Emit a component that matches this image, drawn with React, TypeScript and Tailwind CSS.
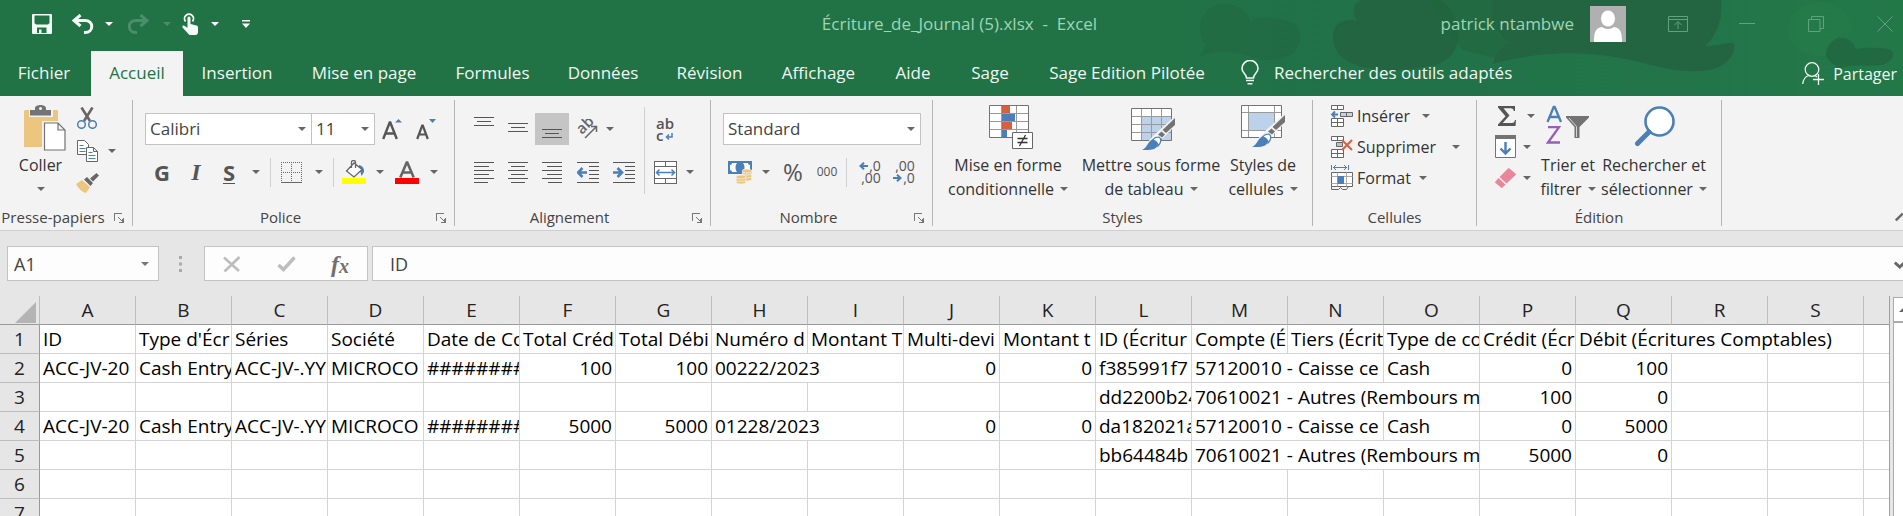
import type { ReactNode } from "react";

const UI = "font-['Open_Sans','Noto_Sans',sans-serif]";
const GRID = "font-['Open_Sans','Noto_Sans',sans-serif]";

/* ---------- small shared pieces ---------- */

function Caret({ className = "fill-[#666]" }: { className?: string }) {
  return (
    <svg width="8" height="4" viewBox="0 0 8 4" className={`shrink-0 ${className}`} aria-hidden="true">
      <path d="M0 0h8L4 4z" />
    </svg>
  );
}

function Btn({ label, className, children }: { label: string; className: string; children: ReactNode }) {
  return (
    <button type="button" aria-label={label} className={`flex shrink-0 items-center justify-center ${className}`}>
      {children}
    </button>
  );
}

function Sep() {
  return <span className="mx-[3px] h-[29px] w-px shrink-0 bg-[#d0d0d0]" />;
}

function Group({
  label,
  className,
  launcher = false,
  children,
}: {
  label: string;
  className: string;
  launcher?: boolean;
  children: ReactNode;
}) {
  return (
    <section aria-label={label} className={`my-1 flex h-[126px] shrink-0 flex-col border-r border-[#b5b5b5] ${className}`}>
      <div className="h-[109px] shrink-0">{children}</div>
      <div className="flex items-center">
        <span className="flex-1 text-center text-[15px] leading-[17px] whitespace-nowrap text-[#444]">{label}</span>
        {launcher && (
          <Btn label={`${label} : options`} className="w-[26px]">
            <svg width="10" height="10" viewBox="0 0 10 10" fill="none" stroke="#777" shapeRendering="crispEdges">
              <path d="M.5 8V.5H8" />
              <path d="M4 4l4 4M9.500 5v4.500H5M8.500 6v3H6" />
            </svg>
          </Btn>
        )}
      </div>
    </section>
  );
}

/* ---------- title bar ---------- */

function HeaderArt() {
  return (
    <svg
      className="absolute top-0 right-0"
      width="723"
      height="96"
      viewBox="0 0 723 96"
      aria-hidden="true"
    >
      <defs>
        <linearGradient id="fade" x1="0" x2="1">
          <stop offset="0" stopColor="#217346" />
          <stop offset=".2" stopColor="#21704a" stopOpacity=".7" />
          <stop offset="1" stopColor="#237848" />
        </linearGradient>
      </defs>
      <rect width="723" height="96" fill="url(#fade)" />
      <g fill="#226540">
        <path opacity=".5" d="M20 30C20 12 32 3 46 4c14 1 22 8 24 18 10-8 28-4 42 0 12 6 8 24 2 30-8 8-26 10-40 6-20-8-40-8-54-1 2-6 4-10 6-12-4-4-6-9-6-15z" />
        <path d="M153 36c0-14 14-18 24-15C170 8 176 0 184 0h76c14 8 20 24 18 40-2 14-12 24-30 26-20 4-40 6-60 2-22-4-35-14-35-32z" />
        <path d="M250 0h90l-18 60-40-10z" opacity=".6" />
        <path d="M313 0h228c2 14-2 34-16 46 14 0 24-4 28-3 4 6-2 18-14 24-18 8-46 4-76-4-44-12-98-14-150 1 2-10 8-16 16-22-14-10-20-26-16-42z" />
        <path opacity=".8" d="M646 54c0-12 8-16 16-16 8 0 12 6 14 11 10-2 32-2 36 2 4 6-4 14-12 14-16 2-30-2-40 4-4-4-14-8-14-15z" />
      </g>
      <g fill="#247a49" opacity=".8">
        <path d="M610 40c-8-20 8-36 26-38 24-4 38 16 36 30-14 2-26 12-26 24-16 2-30-4-36-16z" />
      </g>
    </svg>
  );
}

function TitleBar() {
  return (
    <div className="relative grid h-[51px] grid-cols-[1fr_auto_1fr] items-center pb-[3px] pl-4">
      <div className="flex items-center pl-[7px]">
        <Btn label="Enregistrer" className="w-[38px]">
          <svg width="20" height="20" viewBox="0 0 20 20">
            <path fill="#f4faf6" fillRule="evenodd" d="M1 0h18a1 1 0 0 1 1 1v18a1 1 0 0 1-1 1H1a1 1 0 0 1-1-1V1a1 1 0 0 1 1-1zm1.500 1.500v7.500l1.500 1.500h12l1.500-1.500V1.500zM5 13.500V19h2v-3.500h2.500V19H14.500v-5.500z" />
          </svg>
        </Btn>
        <Btn label="Annuler" className="w-[44px]">
          <svg width="22" height="20" viewBox="0 0 22 20" fill="none" stroke="#f4faf6" strokeWidth="3">
            <path d="M8.500 1L2 6.500 8.500 12M2.500 6.500H13c9 0 9 12 0 12h-1" />
          </svg>
        </Btn>
        <Btn label="Options d'annulation" className="w-2">
          <Caret className="fill-white" />
        </Btn>
        <Btn label="Rétablir" className="w-[50px]">
          <svg width="22" height="20" viewBox="0 0 22 20" fill="none" stroke="#4b8e69" strokeWidth="3">
            <path d="M13.500 1L20 6.500 13.500 12M19.500 6.500H9c-9 0-9 12 0 12h1" />
          </svg>
        </Btn>
        <Btn label="Options de rétablissement" className="w-2">
          <Caret className="fill-[#4b8e69]" />
        </Btn>
        <Btn label="Mode tactile/souris" className="w-[38px]">
          <svg width="16" height="22" viewBox="0 0 16 22">
            <path fill="none" stroke="#f4faf6" strokeWidth="1.800" d="M3.500 8.500A4.500 4.500 0 1 1 10.500 8.500" />
            <path fill="#f4faf6" d="M5.500 5a1.500 1.500 0 0 1 3 0v6l6 1.500c1 .3 1.500 1 1.500 2V19c0 2-1 3-2.500 3H8.500c-1 0-1.500-.4-2-1L.5 14.500c-.8-1 .6-2.500 1.800-1.700l3.200 2z" />
          </svg>
        </Btn>
        <Btn label="Options du mode tactile" className="w-3">
          <Caret className="fill-white" />
        </Btn>
        <Btn label="Personnaliser la barre d'outils" className="w-[50px]">
          <svg width="8" height="8" viewBox="0 0 8 8" fill="#fff">
            <path d="M0 0h8v1.500H0zM0 3.500h8L4 8z" />
          </svg>
        </Btn>
      </div>
      <h1 className="text-[17px] whitespace-pre text-[#9fd5b5]">Écriture_de_Journal (5).xlsx  -  Excel</h1>
      <div className="flex items-center justify-end">
        <span className="text-[17px] whitespace-nowrap text-[#9fd5b5]">patrick ntambwe</span>
        <svg className="mr-[17px] ml-4 shrink-0" width="36" height="36" viewBox="0 0 36 36" role="img" aria-label="Compte">
          <rect width="36" height="36" fill="#b0b0b0" />
          <ellipse cx="18" cy="12.500" rx="7" ry="8" fill="#fff" />
          <path fill="#fff" d="M4 36c0-9 1-14 8-15 3 2.500 9 2.500 12 0 7 1 8 6 8 15z" />
        </svg>
        <Btn label="Options d'affichage du ruban" className="w-[69px]">
          <svg width="20" height="16" viewBox="0 0 20 16" fill="none" stroke="#62a17f">
            <path d="M.5.5h19v15H.5zM.5 3.500h19M10 13V6M6.500 9L10 5.500 13.500 9" />
          </svg>
        </Btn>
        <Btn label="Réduire" className="w-[69px]">
          <svg width="16" height="2" viewBox="0 0 16 2">
            <path fill="#62a17f" d="M0 0h16v1H0z" />
          </svg>
        </Btn>
        <Btn label="Niveau inférieur" className="w-[69px]">
          <svg width="16" height="16" viewBox="0 0 16 16" fill="none" stroke="#62a17f">
            <path d="M.5 3.500h11.500v12H.5zM3.500 3.500v-3h12v12h-3.500" />
          </svg>
        </Btn>
        <Btn label="Fermer" className="w-[53px] pl-4">
          <svg width="16" height="16" viewBox="0 0 16 16" fill="none" stroke="#62a17f">
            <path d="M.5.5l15 15M15.500.5l-15 15" />
          </svg>
        </Btn>
      </div>
    </div>
  );
}

const TABS: [string, string][] = [
  ["Fichier", "w-[91px] pr-[3px]"],
  ["Accueil", "w-[92px]"],
  ["Insertion", "w-[108px]"],
  ["Mise en page", "w-[146px]"],
  ["Formules", "w-[111px]"],
  ["Données", "w-[110px]"],
  ["Révision", "w-[103px]"],
  ["Affichage", "w-[115px]"],
  ["Aide", "w-[74px]"],
  ["Sage", "w-[80px]"],
  ["Sage Edition Pilotée", "w-[194px]"],
];

function Tabs() {
  return (
    <nav className="relative flex h-[45px] text-[17px] whitespace-nowrap text-[#eef7f1]">
      {TABS.map(([name, width]) => (
        <button
          key={name}
          type="button"
          className={`shrink-0 pb-[2px] text-center ${width} ${name === "Accueil" ? "bg-[#f3f3f3] text-[#217346]" : ""}`}
        >
          {name}
        </button>
      ))}
      <button type="button" className="flex shrink-0 items-center gap-[15px] pb-[2px] pl-[17px]">
        <svg width="18" height="25" viewBox="0 0 18 25" fill="none" stroke="#eef7f1" strokeWidth="1.600">
          <path d="M5.500 18c0-4-4.500-5-4.500-9.500a8 8 0 0 1 16 0C17 13 12.500 14 12.500 18zM5 20.500h8M6.500 23.700h5" />
        </svg>
        <span>Rechercher des outils adaptés</span>
      </button>
      <button type="button" className="ml-auto flex shrink-0 items-center gap-[9px] pr-[6px]">
        <svg width="22" height="23" viewBox="0 0 22 23" fill="none" stroke="#eef7f1" strokeWidth="1.300">
          <circle cx="10" cy="7.500" r="6.800" />
          <path d="M.7 22c.5-4.500 3-7.500 6-8.500M11 17.500h11M16.500 12v11M13 13.500l2 1.500" />
        </svg>
        <span className="text-base">Partager</span>
      </button>
    </nav>
  );
}

/* ---------- ribbon ---------- */

function Clipboard() {
  return (
    <Group label="Presse-papiers" launcher className="w-[133px]">
      <div className="flex">
        <button type="button" className="flex w-[73px] flex-col items-center pt-[5px] pl-2 text-base leading-6 text-[#333]">
          <svg width="42" height="46" viewBox="0 0 42 46" className="ml-2">
            <path fill="#ecc67e" d="M1 5h32a1 1 0 0 1 1 1v36H0V6z" />
            <path fill="#f3f3f3" d="M5 5h24v7H5z" />
            <path fill="#737373" d="M6 5h5V3c0-2 3-3 5.500-3s5.500 1 5.500 3v2h5v5.500H6z" />
            <circle cx="16.500" cy="3.500" r="1.500" fill="#f3f3f3" />
            <path fill="#f3f3f3" d="M18 16h18l6 6v24H18z" />
            <path fill="#fff" stroke="#737373" strokeWidth="1.200" d="M20.500 18h13.500l7 7v20H20.500zM34 18v7h7" />
          </svg>
          <span className="pt-[2px]">Coller</span>
          <span className="flex h-6 items-center">
            <Caret />
          </span>
        </button>
        <div className="flex flex-col pt-[5px]">
          <Btn label="Couper" className="h-[26px] w-7">
            <svg width="20" height="22" viewBox="0 0 20 22" fill="none">
              <path stroke="#666" strokeWidth="2.600" d="M4.500 0.500L13 14M15.500 0.500L7 14" />
              <circle cx="4.500" cy="17.500" r="3.800" stroke="#4a7fb8" strokeWidth="1.500" />
              <circle cx="15.500" cy="17.500" r="3.800" stroke="#4a7fb8" strokeWidth="1.500" />
            </svg>
          </Btn>
          <div className="flex">
            <Btn label="Copier" className="h-10 w-7">
              <svg width="21" height="22" viewBox="0 0 21 22" fill="#fff" stroke="#666">
                <path d="M.5.5h7l4 4v10H.5z" />
                <path stroke="#4a7fb8" d="M2.500 5.500h4M2.500 8.500h6M2.500 11.500h6" />
                <path d="M9.500 7.500h7l4 4v10h-11zM16.500 7.500v4h4" />
                <path stroke="#4a7fb8" d="M11.500 12.500h4M11.500 15.500h7M11.500 18.500h7" />
              </svg>
            </Btn>
            <Btn label="Options de copie" className="w-[22px]">
              <Caret />
            </Btn>
          </div>
          <Btn label="Reproduire la mise en forme" className="h-6 w-7">
            <svg width="23" height="20" viewBox="0 0 23 20">
              <path fill="#ecc67e" d="M0 11l6-4 8 7-4 6c-4-1-8-5-10-9z" />
              <path fill="#666" d="M8 6.500l3-2.500 6 6-2.500 3zM14 5.500L20.500 0 23 2.500 17 8.500z" />
            </svg>
          </Btn>
        </div>
      </div>
    </Group>
  );
}

function Combo({ label, value, className }: { label: string; value: string; className: string }) {
  return (
    <div className={`relative h-8 shrink-0 ${className}`}>
      <select
        aria-label={label}
        defaultValue={value}
        className="h-full w-full appearance-none border border-[#c3c3c3] bg-white pl-1 text-[17px] leading-7 text-[#444]"
      >
        <option>{value}</option>
      </select>
      <span className="pointer-events-none absolute inset-y-0 right-[6px] flex items-center">
        <Caret />
      </span>
    </div>
  );
}

function FontGroup() {
  return (
    <Group label="Police" launcher className="w-[322px]">
      <div className="flex flex-col gap-[11px] pt-[13px] pl-3">
        <div className="flex">
          <Combo label="Police" value="Calibri" className="w-[167px]" />
          <Combo label="Taille de police" value="11" className="-ml-px w-[64px]" />
          <Btn label="Augmenter la taille de police" className="w-[34px]">
            <svg width="20" height="22" viewBox="0 0 20 22">
              <path fill="none" stroke="#555" strokeWidth="2.400" d="M1.200 21L7.700 4.500h.6L14.800 21M4 15.500h8" />
              <path fill="#4a7fb8" d="M13 4.500h7L16.500 1z" />
            </svg>
          </Btn>
          <Btn label="Réduire la taille de police" className="w-[34px]">
            <svg width="20" height="22" viewBox="0 0 20 22">
              <path fill="none" stroke="#555" strokeWidth="2.200" d="M1.200 21L6.200 7.500h.6L11.800 21M3.500 16.500h6" />
              <path fill="#4a7fb8" d="M13 1h7l-3.500 4z" />
            </svg>
          </Btn>
        </div>
        <div className="flex h-8 items-center text-[22px] text-[#555]">
          <Btn label="Gras" className="w-[34px] font-bold">
            G
          </Btn>
          <Btn label="Italique" className="w-[34px] font-['Liberation_Serif',serif] text-2xl font-bold italic">
            I
          </Btn>
          <Btn label="Souligné" className="w-8 font-bold">
            <span className="border-b border-[#555] leading-[22px]">S</span>
          </Btn>
          <Btn label="Options de soulignement" className="w-[22px]">
            <Caret />
          </Btn>
          <Sep />
          <Btn label="Bordures" className="w-[34px]">
            <svg width="21" height="21" viewBox="0 0 21 21" fill="none" stroke="#666" shapeRendering="crispEdges">
              <path strokeDasharray="1 1" d="M0 .5h21M.5 0v20M20.500 0v20M10.500 0v20M0 10.500h21" />
              <path d="M0 20.500h21" />
            </svg>
          </Btn>
          <Btn label="Options de bordure" className="w-[22px]">
            <Caret />
          </Btn>
          <Sep />
          <Btn label="Couleur de remplissage" className="w-[34px]">
            <svg width="24" height="24" viewBox="0 0 24 24">
              <path fill="#ff0" d="M0 18h24v6H0z" />
              <path fill="#4a7fb8" d="M17 5c4 1 5.500 4 5 7l-2.500 4c-1-3-1-6-2.500-8z" />
              <path fill="#fff" stroke="#666" strokeWidth="1.300" d="M4.500 11l7.500-8 8 6.500-8 7.500zM9.500 8V2c0-2 4-2 4 0v6" />
            </svg>
          </Btn>
          <Btn label="Options de remplissage" className="w-[18px]">
            <Caret />
          </Btn>
          <Btn label="Couleur de police" className="w-9">
            <svg width="24" height="24" viewBox="0 0 24 24">
              <path fill="none" stroke="#666" strokeWidth="2.600" d="M5.300 17.500L11.700 2.500h.6L18.700 17.500M8 12.500h8" />
              <path fill="#f00" d="M0 18h24v6H0z" />
            </svg>
          </Btn>
          <Btn label="Options de couleur de police" className="w-[18px]">
            <Caret />
          </Btn>
        </div>
      </div>
    </Group>
  );
}

function Lines({ d, h = 21 }: { d: string; h?: number }) {
  return (
    <svg width="20" height={h} viewBox={`0 0 20 ${h}`} stroke="#555" shapeRendering="crispEdges" fill="none">
      <path d={d} />
    </svg>
  );
}

function Indent({ right = false }: { right?: boolean }) {
  return (
    <svg width="22" height="21" viewBox="0 0 22 21" fill="none">
      <path stroke="#555" shapeRendering="crispEdges" d="M0 .5h22M12 4.500h10M12 8.500h10M12 12.500h10M12 16.500h10M0 20.500h22" />
      {right ? (
        <path stroke="#4a7fb8" strokeWidth="2.600" d="M0 10.500h8M4.500 6l4.500 4.500L4.500 15" />
      ) : (
        <path stroke="#4a7fb8" strokeWidth="2.600" d="M2 10.500h8M5.500 6L1 10.500 5.500 15" />
      )}
    </svg>
  );
}

function AlignGroup() {
  return (
    <Group label="Alignement" launcher className="w-[256px]">
      <div className="flex pl-3">
        <div className="flex w-[174px] flex-col gap-[11px] pt-[13px]">
          <div className="flex h-8">
            <Btn label="Aligner en haut" className="w-[34px]">
              <Lines d="M0 .5h20M3 4.500h14M0 8.500h20" h={24} />
            </Btn>
            <Btn label="Aligner au centre" className="w-[34px]">
              <Lines d="M0 6.500h20M3 10.500h14M0 14.500h20" h={24} />
            </Btn>
            <Btn label="Aligner en bas" className="w-[34px] bg-[#c5c5c5]">
              <Lines d="M0 12.500h20M3 16.500h14M0 20.500h20" h={24} />
            </Btn>
            <Btn label="Orientation" className="w-9">
              <svg width="22" height="20" viewBox="0 0 22 20">
                <text x="0" y="0" transform="translate(6 16) rotate(-45)" className="font-['Open_Sans',sans-serif] text-[15px] font-semibold" fill="#666">
                  ab
                </text>
                <path fill="none" stroke="#666" strokeWidth="1.500" d="M9 19L20 8M15 7.500h5.500V13" />
              </svg>
            </Btn>
            <Btn label="Options d'orientation" className="w-[10px]">
              <Caret />
            </Btn>
          </div>
          <div className="flex h-8">
            <Btn label="Aligner à gauche" className="w-[34px]">
              <Lines d="M0 .5h20M0 4.500h15M0 8.500h20M0 12.500h15M0 16.500h20M0 20.500h14" />
            </Btn>
            <Btn label="Centrer" className="w-[34px]">
              <Lines d="M0 .5h20M3 4.500h14M0 8.500h20M3 12.500h14M0 16.500h20M3 20.500h14" />
            </Btn>
            <Btn label="Aligner à droite" className="w-[34px]">
              <Lines d="M0 .5h20M5 4.500h15M0 8.500h20M5 12.500h15M0 16.500h20M6 20.500h14" />
            </Btn>
            <Btn label="Diminuer le retrait" className="w-[38px]">
              <Indent />
            </Btn>
            <Btn label="Augmenter le retrait" className="w-[34px]">
              <Indent right />
            </Btn>
          </div>
        </div>
        <span className="mx-[3px] mt-[7px] h-[87px] w-px bg-[#d0d0d0]" />
        <div className="flex flex-col gap-[11px] pt-[13px]">
          <Btn label="Renvoyer à la ligne automatiquement" className="h-8 w-[34px]">
            <span className="flex flex-col text-[15px] leading-[12px] font-semibold text-[#555]">
              <span>ab</span>
              <span className="flex items-end">
                c
                <svg width="8" height="8" viewBox="0 0 8 8" fill="none" stroke="#4a7fb8" strokeWidth="1.500" className="ml-[2px]">
                  <path d="M7 0v4H1.500M4 1.500L1.500 4 4 6.500" />
                </svg>
              </span>
            </span>
          </Btn>
          <div className="flex h-8">
            <Btn label="Fusionner et centrer" className="w-[34px]">
              <svg width="23" height="23" viewBox="0 0 23 23" fill="none">
                <path fill="#fff" stroke="#666" shapeRendering="crispEdges" d="M.5.5h22v22H.5zM.5 5.500h22M.5 17.500h22M11.500.5v5M11.500 17.500v5" />
                <path stroke="#4a7fb8" strokeWidth="1.500" d="M2.500 11.500h18M5.500 8.500l-3 3 3 3M17.500 8.500l3 3-3 3" />
              </svg>
            </Btn>
            <Btn label="Options de fusion" className="w-4">
              <Caret />
            </Btn>
          </div>
        </div>
      </div>
    </Group>
  );
}

function NumberGroup() {
  return (
    <Group label="Nombre" launcher className="w-[222px]">
      <div className="flex flex-col gap-[11px] pt-[13px] pl-3">
        <Combo label="Format de nombre" value="Standard" className="w-[198px]" />
        <div className="flex h-8 items-center text-[#555]">
          <Btn label="Format comptabilité" className="w-[34px]">
            <svg width="24" height="23" viewBox="0 0 24 23">
              <path fill="#4a7fb8" d="M0 0h24v13H0z" />
              <path fill="#fff" d="M4 2h5c-2 2-2 7 0 9H4c0-1-1-2-2-2V4c1 0 2-1 2-2zM20 2h-5c2 2 2 7 0 9h5c0-1 1-2 2-2V4c-1 0-2-1-2-2z" />
              <g fill="#ecc67e" stroke="#f3f3f3" strokeWidth=".7">
                <ellipse cx="19" cy="18" rx="5" ry="2" />
                <ellipse cx="19" cy="15" rx="5" ry="2" />
                <ellipse cx="19" cy="12" rx="5" ry="2" />
                <ellipse cx="19" cy="10" rx="5" ry="2" />
                <ellipse cx="13" cy="21" rx="5" ry="2" />
                <ellipse cx="13" cy="18.500" rx="5" ry="2" />
                <ellipse cx="13" cy="16" rx="5" ry="2" />
              </g>
            </svg>
          </Btn>
          <Btn label="Options de format comptabilité" className="w-[18px]">
            <Caret />
          </Btn>
          <Btn label="Style de pourcentage" className="w-9 text-2xl">
            %
          </Btn>
          <Btn label="Séparateur de milliers" className="w-8 text-xs">
            000
          </Btn>
          <Sep />
          <Btn label="Ajouter une décimale" className="ml-[3px] w-[34px] text-sm leading-3">
            <span className="flex flex-col items-end">
              <span className="flex items-center">
                <svg width="10" height="8" viewBox="0 0 10 8" fill="none" stroke="#4a7fb8" strokeWidth="2">
                  <path d="M1.500 4H9M5 .7L1.500 4 5 7.300" />
                </svg>
                ,0
              </span>
              <span>,00</span>
            </span>
          </Btn>
          <Btn label="Réduire les décimales" className="w-[34px] text-sm leading-3">
            <span className="flex flex-col items-end">
              <span>,00</span>
              <span className="flex items-center">
                <svg width="10" height="8" viewBox="0 0 10 8" fill="none" stroke="#4a7fb8" strokeWidth="2">
                  <path d="M0 4h7.500M4 .7L7.500 4 4 7.300" />
                </svg>
                ,0
              </span>
            </span>
          </Btn>
        </div>
      </div>
    </Group>
  );
}

function BigButton({ icon, line1, line2, className }: { icon: ReactNode; line1: string; line2: string; className: string }) {
  return (
    <button type="button" className={`flex shrink-0 flex-col items-center text-base leading-6 whitespace-nowrap text-[#333] ${className}`}>
      <span className="flex h-[53px] items-start pt-[5px]">{icon}</span>
      <span>{line1}</span>
      <span className="flex items-center gap-[6px]">
        {line2}
        <Caret />
      </span>
    </button>
  );
}

function Brush() {
  return (
    <g>
      <path fill="#f3f3f3" d="M44 8v10L32 30l-6 2-4 10H10l12-14z" />
      <path fill="#737373" d="M44 10v7l-9 8-3.500-3zM30.500 23.500l3.500 3-3 3-4-3z" />
      <path fill="#4a7fb8" d="M11 42c5-2 6-9 11-11l4 1c2 2 1 7-2 8.500-4 2-9 1.500-13 1.500z" />
      <path fill="#fff" stroke="#4a7fb8" strokeWidth="1.200" d="M22 32c1-2 4-3 6-3 3 2 2 6-1 9 0-3-2-5-5-6z" />
    </g>
  );
}

function StylesGroup() {
  return (
    <Group label="Styles" className="w-[380px]">
      <div className="flex pl-[7px]">
        <BigButton
          line1="Mise en forme"
          line2="conditionnelle"
          className="w-[136px]"
          icon={
            <svg width="44" height="44" viewBox="0 0 44 44" className="ml-[6px]">
              <path fill="#fff" d="M0 .5h40v32H0z" />
              <path fill="#d65f3f" d="M13 1h8v7h-8zM13 17h10v7H13z" />
              <path fill="#4a7fb8" d="M13 9h13v7H13zM13 25h5v7h-5z" />
              <path fill="none" stroke="#9a9a9a" d="M0 8.500h40M0 16.500h40M0 24.500h40M12.500 0v32M27.500 0v32" />
              <path fill="none" stroke="#737373" d="M.5.5h39v32H.5z" />
              <path fill="#fff" stroke="#666" d="M23.500 27.500h20v16h-20z" />
              <path stroke="#333" strokeWidth="1.300" fill="none" d="M28.500 33.500h10M28.500 37.500h10M36.500 30l-6 11" />
            </svg>
          }
        />
        <BigButton
          line1="Mettre sous forme"
          line2="de tableau"
          className="w-[150px]"
          icon={
            <svg width="44" height="45" viewBox="0 -3 44 45" className="ml-1">
              <path fill="#fff" d="M0 .5h40v32H0z" />
              <path fill="#bcd2ea" d="M10.500 8.500h30v24h-30z" />
              <path fill="none" stroke="#9a9a9a" d="M0 8.500h40M0 16.500h40M0 24.500h40M10.500 0v32M20.500 0v32M30.500 0v32" />
              <path fill="none" stroke="#737373" d="M.5.5h40v32H.5z" />
              <Brush />
            </svg>
          }
        />
        <BigButton
          line1="Styles de"
          line2="cellules"
          className="w-[74px]"
          icon={
            <svg width="44" height="44" viewBox="0 0 44 44">
              <path fill="#fff" d="M0 .5h40v32H0z" />
              <path fill="#bcd2ea" d="M7.500 7.500h26v18h-26z" />
              <path fill="none" stroke="#9a9a9a" d="M0 7.500h40M0 25.500h40M7.500 0v32M33.500 0v32" />
              <path fill="none" stroke="#737373" d="M.5.5h40v32H.5z" />
              <Brush />
            </svg>
          }
        />
      </div>
    </Group>
  );
}

function CellsGroup() {
  const row = "flex h-[31px] items-center text-base text-[#333]";
  return (
    <Group label="Cellules" className="w-[164px]">
      <div className="flex flex-col items-start pl-[17px]">
        <button type="button" className={row}>
          <svg width="23" height="22" viewBox="0 0 23 22" fill="#fff" stroke="#666" className="mr-1">
            <path d="M1.500.5h12v4h-12zM7.500.5v4M1.500 13.500h12v8h-12zM7.500 13.500v8M1.500 17.500h12" />
            <path fill="#c6d3e3" d="M10.500 7.500h12v4h-12zM16.500 7.500v4" />
            <path fill="none" stroke="#4a7fb8" strokeWidth="1.800" d="M2 9.500h6M5 6.500l-3 3 3 3" />
          </svg>
          <span className="pr-3">Insérer</span>
          <Caret />
        </button>
        <button type="button" className={row}>
          <svg width="23" height="22" viewBox="0 0 23 22" fill="#fff" stroke="#666" className="mr-1">
            <path d="M1.500.5h12v4h-12zM7.500.5v4M1.500 13.500h12v8h-12zM7.500 13.500v8M1.500 17.500h12" />
            <path fill="#b8c4d2" d="M6.500 6.500h6v4h-6z" />
            <path fill="none" stroke="#d65f3f" strokeWidth="2" d="M12 4l10 10M22 4L12 14" />
          </svg>
          <span className="pr-4">Supprimer</span>
          <Caret />
        </button>
        <button type="button" className={row}>
          <svg width="23" height="25" viewBox="0 0 23 25" fill="#fff" stroke="#666" className="mr-1">
            <path fill="none" stroke="#4a7fb8" d="M1.500 0v5M18.500 0v5M3 2.500h14M6 0L3.500 2.500 6 5M14 0l2.500 2.500L14 5" />
            <path d="M1.500 7.500h21v14h-21z" />
            <path stroke="#aaa" d="M1.500 11.500h21M1.500 18.500h21M7.500 7.500v14M16.500 7.500v14" />
            <path fill="#4a7fb8" stroke="none" d="M7.500 11h6.500v8H7.500z" />
            <path fill="none" d="M1.500 21.500v3h7l2-2 2 2h4l2-3" />
          </svg>
          <span className="pr-2">Format</span>
          <Caret />
        </button>
      </div>
    </Group>
  );
}

function EditGroup() {
  return (
    <Group label="Édition" className="w-[245px]">
      <div className="flex pl-[14px]">
        <div className="flex flex-col">
          <div className="flex h-[31px] items-center">
            <Btn label="Somme automatique" className="w-8">
              <svg width="18" height="20" viewBox="0 0 18 20">
                <path fill="#555" d="M0 0h17v5h-1.200c-.3-2-1.300-2.800-3-2.800H5.500l6 7.300-6.800 7.500H14c1.700 0 2.600-1 3-3h1L17.500 20H0v-1.500l7.500-8.300L0 1.500z" />
              </svg>
            </Btn>
            <Btn label="Options de somme" className="ml-[3px] w-[10px]">
              <Caret />
            </Btn>
          </div>
          <div className="flex h-[31px] items-center">
            <Btn label="Remplissage" className="w-7">
              <svg width="21" height="23" viewBox="0 0 21 23">
                <path fill="#fff" stroke="#737373" d="M.5.5h20v22H.5z" />
                <path fill="#737373" d="M0 0h21v4H0z" />
                <path fill="none" stroke="#4a7fb8" strokeWidth="2.400" d="M10.500 7v12M5.500 13.500l5 5 5-5" />
              </svg>
            </Btn>
            <Btn label="Options de remplissage" className="ml-[3px] w-[10px]">
              <Caret />
            </Btn>
          </div>
          <div className="flex h-[31px] items-center">
            <Btn label="Effacer" className="w-7">
              <svg width="21" height="20" viewBox="0 0 21 20" fill="#e8879a">
                <path d="M13 .5a1 1 0 0 1 1.500 0l6 5a1 1 0 0 1 0 1.500l-9 8.500-7-6.500z" />
                <path d="M3.500 10l7 6.500-3 3a1 1 0 0 1-1.500 0l-5.500-4.500a1 1 0 0 1 0-1.500z" />
              </svg>
            </Btn>
            <Btn label="Options d'effacement" className="ml-[3px] w-[10px]">
              <Caret />
            </Btn>
          </div>
        </div>
        <BigButton
          line1="Trier et"
          line2="filtrer"
          className="ml-[2px] w-[60px]"
          icon={
            <svg width="44" height="40" viewBox="0 0 44 40">
              <path fill="none" stroke="#4a7fb8" strokeWidth="2.300" d="M1.500 17L7.700 2h1L15 17M3.800 12h9" />
              <path fill="none" stroke="#9560b8" strokeWidth="2.300" d="M2 22.200h11L2 37.500h12" />
              <path fill="#737373" d="M20 11h23v1.500L33.500 22v11h-5V22L20 12.500z" />
              <path stroke="#d8d8d8" d="M23 13l7.500 8.500V32" fill="none" />
            </svg>
          }
        />
        <BigButton
          line1="Rechercher et"
          line2="sélectionner"
          className="w-[112px]"
          icon={
            <svg width="41" height="42" viewBox="0 0 41 42" fill="none" stroke="#4a7fb8">
              <circle cx="25.500" cy="16.500" r="14" fill="#fff" strokeWidth="2.600" />
              <path strokeWidth="5" strokeLinecap="round" d="M15 27L3.500 38.500" />
            </svg>
          }
        />
      </div>
    </Group>
  );
}

function Ribbon() {
  return (
    <div className="flex h-[135px] shrink-0 border-b border-[#cfcfcf] bg-[#f3f3f3]">
      <Clipboard />
      <FontGroup />
      <AlignGroup />
      <NumberGroup />
      <StylesGroup />
      <CellsGroup />
      <EditGroup />
      <button type="button" aria-label="Réduire le ruban" className="ml-auto self-end pb-2">
        <svg width="8" height="10" viewBox="0 0 8 10" fill="none" stroke="#666" strokeWidth="2.400">
          <path d="M.8 8.500l7-7" />
        </svg>
      </button>
    </div>
  );
}

/* ---------- formula bar ---------- */

function FormulaBar() {
  return (
    <div className="flex shrink-0 items-center pt-[15px] pb-[15px] pl-[7px]">
      <div className="relative h-[35px] w-[152px]">
        <input
          aria-label="Zone Nom"
          defaultValue="A1"
          className="h-full w-full border border-[#c3c3c3] bg-[#fdfdfd] pl-[6px] text-lg text-[#444]"
        />
        <span className="pointer-events-none absolute inset-y-0 right-[10px] flex items-center">
          <Caret className="fill-[#777]" />
        </span>
      </div>
      <svg width="3" height="16" viewBox="0 0 3 16" fill="#aaa" className="mx-5" aria-hidden="true">
        <path d="M0 0h3v3H0zM0 6.500h3v3H0zM0 13h3v3H0z" />
      </svg>
      <div className="ml-[2px] flex h-[35px] w-[164px] items-center border border-[#c3c3c3] bg-[#fdfdfd]">
        <Btn label="Annuler la saisie" className="w-[54px]">
          <svg width="18" height="16" viewBox="0 0 18 16" fill="none" stroke="#bdbdbd" strokeWidth="2.600">
            <path d="M1 1.500l15 13.500M16.500 1L1.500 15.500" />
          </svg>
        </Btn>
        <Btn label="Valider la saisie" className="w-[54px]">
          <svg width="19" height="16" viewBox="0 0 19 16" fill="none" stroke="#bdbdbd" strokeWidth="3.400">
            <path d="M1.500 9l5 4.500L17.500 1.500" />
          </svg>
        </Btn>
        <Btn label="Insérer une fonction" className="w-[54px] font-['Liberation_Serif',serif] text-2xl font-bold text-[#707070] italic">
          <span>f</span>
          <span className="pt-1 text-xl">x</span>
        </Btn>
      </div>
      <div className="relative ml-1 h-[35px] flex-1">
        <input
          aria-label="Barre de formule"
          defaultValue="ID"
          className="h-full w-full border-y border-l border-[#c3c3c3] bg-[#fdfdfd] pl-[17px] text-lg text-[#444]"
        />
        <svg width="9" height="8" viewBox="0 0 9 8" fill="none" stroke="#666" strokeWidth="3" className="absolute top-[15px] right-0">
          <path d="M.8 1.500l5 4.500L10 2" />
        </svg>
      </div>
    </div>
  );
}

/* ---------- worksheet ---------- */

type Cell = { t?: string; span?: number; num?: boolean };
const s = (t: string, span = 1): Cell => ({ t, span });
const n = (t: string): Cell => ({ t, num: true });
const blank = (count: number): Cell[] => Array.from({ length: count }, () => ({}));

const COLUMNS = "ABCDEFGHIJKLMNOPQRS".split("");

const ROWS: Cell[][] = [
  [
    s("ID"),
    s("Type d'Écr"),
    s("Séries"),
    s("Société"),
    s("Date de Co"),
    s("Total Créd"),
    s("Total Débi"),
    s("Numéro d"),
    s("Montant T"),
    s("Multi-devi"),
    s("Montant t"),
    s("ID (Écritur"),
    s("Compte (É"),
    s("Tiers (Écrit"),
    s("Type de co"),
    s("Crédit (Écr"),
    s("Débit (Écritures Comptables)", 3),
    {},
  ],
  [
    s("ACC-JV-20"),
    s("Cash Entry"),
    s("ACC-JV-.YY"),
    s("MICROCO"),
    s("########"),
    n("100"),
    n("100"),
    s("00222/2023", 2),
    n("0"),
    n("0"),
    s("f385991f7"),
    s("57120010 - Caisse ce", 2),
    s("Cash"),
    n("0"),
    n("100"),
    ...blank(3),
  ],
  [...blank(11), s("dd2200b24"), s("70610021 - Autres (Rembours m", 3), n("100"), n("0"), ...blank(3)],
  [
    s("ACC-JV-20"),
    s("Cash Entry"),
    s("ACC-JV-.YY"),
    s("MICROCO"),
    s("########"),
    n("5000"),
    n("5000"),
    s("01228/2023", 2),
    n("0"),
    n("0"),
    s("da182021a"),
    s("57120010 - Caisse ce", 2),
    s("Cash"),
    n("0"),
    n("5000"),
    ...blank(3),
  ],
  [...blank(11), s("bb64484b"), s("70610021 - Autres (Rembours m", 3), n("5000"), n("0"), ...blank(3)],
  blank(20),
  blank(20),
];

function Sheet() {
  return (
    <div className="flex min-h-0 flex-1 overflow-hidden">
      <div className="min-w-0 flex-1 overflow-hidden border-r border-[#a0a0a0]">
        <table className={`w-full table-fixed border-separate border-spacing-0 text-[19px] leading-7 text-black ${GRID}`}>
          <colgroup>
            <col className="w-10" />
            {COLUMNS.map((c) => (
              <col key={c} className="w-24" />
            ))}
            <col />
          </colgroup>
          <thead>
            <tr className="h-[29px] text-[#222]">
              <th aria-label="Tout sélectionner" className="border-r border-b border-r-[#bdbdbd] border-b-[#999] p-0">
                <svg width="21" height="21" viewBox="0 0 21 21" className="mt-1 mr-[3px] ml-auto">
                  <path fill="#b4b4b4" d="M21 0v21H0z" />
                </svg>
              </th>
              {COLUMNS.map((c) => (
                <th key={c} scope="col" className="border-r border-b border-r-[#bdbdbd] border-b-[#999] p-0 pt-px leading-[27px] font-normal">
                  {c}
                </th>
              ))}
              <th className="border-b border-b-[#999] p-0" />
            </tr>
          </thead>
          <tbody>
            {ROWS.map((cells, r) => (
              <tr key={r} className="h-[29px]">
                <th scope="row" className="border-r border-b border-r-[#999] border-b-[#bdbdbd] p-0 font-normal text-[#222]">
                  {r + 1}
                </th>
                {cells.map((cell, i) => (
                  <td
                    key={i}
                    colSpan={cell.span ?? 1}
                    className={`overflow-hidden border-b border-[#d4d4d4] bg-white p-0 whitespace-nowrap ${
                      i === cells.length - 1 ? "" : "border-r"
                    } ${cell.num ? "pr-[3px] text-right" : "pl-[3px] text-left"}`}
                  >
                    {cell.t}
                  </td>
                ))}
              </tr>
            ))}
          </tbody>
        </table>
      </div>
      <div className="flex w-[13px] shrink-0 flex-col pt-px pl-[3px]">
        <button type="button" aria-label="Défiler vers le haut" className="flex h-[26px] items-center justify-end border border-r-0 border-b-2 border-[#ababab] bg-white">
          <svg width="4" height="4" viewBox="0 0 4 4">
            <path fill="#666" d="M4 0v4H0z" />
          </svg>
        </button>
        <div className="flex-1 border-l border-[#ababab] bg-white" />
      </div>
    </div>
  );
}

export default function App() {
  return (
    <div className={`flex h-screen flex-col overflow-hidden bg-[#e6e6e6] ${UI}`}>
      <header className="relative shrink-0 bg-[#217346]">
        <HeaderArt />
        <TitleBar />
        <Tabs />
      </header>
      <Ribbon />
      <FormulaBar />
      <Sheet />
    </div>
  );
}
